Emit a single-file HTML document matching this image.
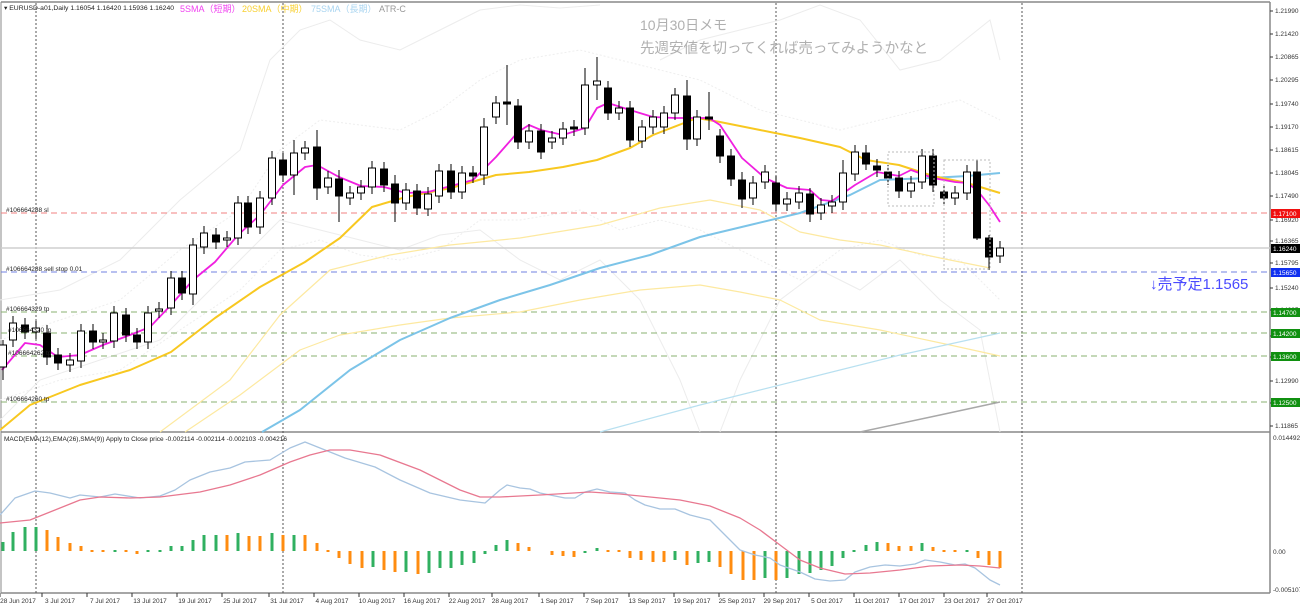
<!DOCTYPE html>
<html><head><meta charset="utf-8"><style>
html,body{margin:0;padding:0;background:#fff;width:1300px;height:608px;overflow:hidden}
svg{display:block}
text{font-family:"Liberation Sans","Noto Sans CJK JP",sans-serif}
</style></head><body>
<svg id="s" width="1300" height="608" xmlns="http://www.w3.org/2000/svg">
<rect width="1300" height="608" fill="#fff"/>
<line x1="1" y1="2" x2="1270" y2="2" stroke="#888" stroke-width="1.5"/>
<line x1="1" y1="2" x2="1" y2="593" stroke="#888"/>
<line x1="1270" y1="2" x2="1270" y2="593" stroke="#888" stroke-width="1.5"/>
<line x1="1" y1="432" x2="1270" y2="432" stroke="#888" stroke-width="1.5"/>
<line x1="1" y1="593" x2="1270" y2="593" stroke="#888" stroke-width="1.5"/>
<g stroke="#555" stroke-dasharray="2,2" stroke-width="1">
<line x1="36" y1="3" x2="36" y2="593"/><line x1="283" y1="3" x2="283" y2="593"/>
<line x1="776" y1="3" x2="776" y2="593"/><line x1="1022" y1="3" x2="1022" y2="593"/>
</g>
<g fill="none" stroke="#ececec" stroke-width="1">
<polyline points="0,300 60,290 120,260 180,200 240,150 270,60 300,30 330,20 360,40 400,50 440,30 480,10 520,5 560,8 600,5"/>
<polyline points="660,60 700,40 740,30 780,20 820,5 860,20 900,70 940,60 990,20 1000,60"/>
<polyline points="0,420 40,380 100,360 160,340 200,300 240,260 280,220 320,230 360,240 400,250 440,235 480,230 520,260 560,280 600,260 640,300 680,380 700,432"/>
<polyline points="720,432 740,380 780,300 820,270 860,290 900,260 940,300 980,330 1000,432"/>
</g>
<g fill="none" stroke="#eeeeee" stroke-dasharray="2,2" stroke-width="1">
<polyline points="0,340 60,320 120,300 180,250 240,210 280,150 320,120 360,125 400,130 440,110 480,80 520,60 580,50 620,60 660,70 700,80 760,110 800,120 840,130 880,120 920,110 960,100 1000,120"/>
<polyline points="0,400 60,380 120,370 180,330 240,290 280,250 320,240 360,255 400,260 440,250 480,220 520,220 580,210 620,230 660,220 700,230 760,260 800,280 840,250 880,240 920,255 960,260 1000,300"/>
</g>
<line x1="1" y1="213" x2="1270" y2="213" stroke="#f08080" stroke-dasharray="6,4"/>
<line x1="1" y1="248" x2="1270" y2="248" stroke="#cfcfcf" stroke-width="1.5"/>
<line x1="1" y1="272" x2="1270" y2="272" stroke="#7080e0" stroke-dasharray="6,4"/>
<g stroke="#8ab070" stroke-dasharray="6,4">
<line x1="1" y1="312" x2="1270" y2="312"/><line x1="1" y1="333" x2="1270" y2="333"/>
<line x1="1" y1="356" x2="1270" y2="356"/><line x1="1" y1="402" x2="1270" y2="402"/>
</g>
<g fill="none" stroke-linejoin="round">
<polyline stroke="#fde9a0" stroke-width="1.2" points="160,432 230,380 280,315 330,270 390,255 450,245 520,238 600,225 660,208 710,200 760,210 800,232 840,240 880,245 940,258 990,268"/>
<polyline stroke="#fde9a0" stroke-width="1.2" points="185,432 240,395 300,350 340,335 400,325 450,318 520,312 580,300 640,290 700,285 740,292 780,300 820,320 880,330 950,345 1000,356"/>
<polyline stroke="#b8e0f0" stroke-width="1.2" points="600,432 700,405 800,380 900,355 1000,333"/>
<polyline stroke="#a8a8a8" stroke-width="1.5" points="860,432 940,415 1000,402"/>
<polyline stroke="#7cc4e8" stroke-width="2" points="262,432 300,410 350,370 400,340 450,318 500,300 550,285 600,268 650,255 700,237 750,225 800,213 850,195 880,180 930,178 967,176 1000,173"/>
<polyline stroke="#f8c820" stroke-width="2" points="0,430 30,405 80,385 130,370 171,352 215,318 260,287 305,262 340,238 372,207 406,197 451,188 496,175 529,172 563,167 597,160 630,148 653,135 697,118 720,122 760,130 800,138 840,147 866,160 899,165 933,176 967,183 1000,193"/>
<polyline stroke="#f020e0" stroke-width="1.8" points="2,370 25,343 40,345 58,357 80,355 103,345 130,335 150,327 171,305 193,280 215,262 238,235 260,215 283,185 305,167 317,165 339,177 361,186 384,187 406,193 428,192 451,186 473,180 496,157 518,132 529,125 541,130 563,135 585,128 597,108 608,103 630,110 653,117 675,118 697,118 709,118 720,125 742,158 765,178 787,188 810,190 821,200 832,201 855,185 877,172 899,176 911,170 933,178 955,182 967,183 977,190 989,205 1000,222"/>
</g>
<g id="candles"></g>
<g fill="none" stroke="#bbb" stroke-dasharray="2,2">
<rect x="888" y="152" width="46" height="54"/><rect x="944" y="160" width="46" height="109"/>
</g>
<g font-size="6.5" fill="#222">
<text x="6" y="212">#106664288 sl</text>
<text x="6" y="271">#106664288 sell stop 0.01</text>
<text x="6" y="311">#106664329 tp</text>
<text x="8" y="332">#106664320 tp</text>
<text x="8" y="355">#106664262 tp</text>
<text x="6" y="401">#106664260 tp</text>
</g>
<text x="4" y="10" font-size="6.5" fill="#222" textLength="170" lengthAdjust="spacingAndGlyphs">▾ EURUSD-a01,Daily  1.16054 1.16420 1.15936 1.16240</text>
<text x="180" y="12" font-size="9" fill="#f040f0">5SMA（短期）</text>
<text x="242" y="12" font-size="9" fill="#f8d030">20SMA（中期）</text>
<text x="311" y="12" font-size="9" fill="#a8d4f0">75SMA（長期）</text>
<text x="379" y="12" font-size="9" fill="#999">ATR-C</text>
<text x="640" y="30" font-size="14" fill="#b0b0b0">10月30日メモ</text>
<text x="640" y="53" font-size="14.5" fill="#b0b0b0">先週安値を切ってくれば売ってみようかなと</text>
<text x="1150" y="289" font-size="15" fill="#4a4aff">↓売予定1.1565</text>
<g font-size="6.5" fill="#333" id="axis"></g>
<g font-size="6.5">
<rect x="1271" y="209" width="29" height="9" fill="#f01010"/><text x="1273" y="216" fill="#fff">1.17100</text>
<rect x="1271" y="244" width="29" height="9" fill="#000"/><text x="1273" y="251" fill="#fff">1.16240</text>
<rect x="1271" y="268" width="29" height="9" fill="#1030f0"/><text x="1273" y="275" fill="#fff">1.15650</text>
<rect x="1271" y="308" width="29" height="9" fill="#109010"/><text x="1273" y="315" fill="#fff">1.14700</text>
<rect x="1271" y="329" width="29" height="9" fill="#109010"/><text x="1273" y="336" fill="#fff">1.14200</text>
<rect x="1271" y="352" width="29" height="9" fill="#109010"/><text x="1273" y="359" fill="#fff">1.13600</text>
<rect x="1271" y="398" width="29" height="9" fill="#109010"/><text x="1273" y="405" fill="#fff">1.12500</text>
</g>
<text x="4" y="441" font-size="6.5" fill="#222">MACD(EMA(12),EMA(26),SMA(9)) Apply to Close price -0.002114 -0.002114 -0.002103 -0.004216</text>
<g id="hist"></g>
<g fill="none" stroke-linejoin="round" stroke-width="1.3">
<polyline stroke="#a8c4e0" points="0,515 15,498 35,491 50,493 70,498 80,495 100,497 115,494 140,498 160,496 175,490 190,480 210,472 230,468 245,462 270,460 290,448 305,442 320,448 345,458 375,467 400,480 430,493 460,500 485,503 500,490 507,485 520,488 530,489 540,493 550,495 565,498 575,498 585,492 597,489 610,492 625,493 635,500 645,505 660,509 675,509 690,515 710,520 725,535 740,550 755,555 770,558 780,565 800,572 815,579 830,581 845,580 855,572 870,567 885,565 900,566 915,564 925,560 940,562 955,565 965,564 975,568 990,580 1000,585"/>
<polyline stroke="#e87890" points="0,523 30,520 60,508 80,500 100,497 130,498 160,497 200,492 230,485 260,475 290,462 310,455 330,450 350,450 380,455 420,470 460,490 480,497 500,497 540,495 590,492 620,494 650,497 680,500 710,506 740,518 760,530 780,545 800,560 820,568 845,574 870,573 900,570 930,566 960,565 980,566 1000,568"/>
</g>
<g font-size="6.5" fill="#333">
<text x="1273" y="440">0.014492</text>
<text x="1273" y="554">0.00</text>
<text x="1273" y="592">-0.005107</text>
</g>
<g font-size="6.5" fill="#333" id="dates"></g>
</svg>
<script>
var NS="http://www.w3.org/2000/svg";
function el(p,t,a,txt){var e=document.createElementNS(NS,t);for(var k in a)e.setAttribute(k,a[k]);if(txt)e.textContent=txt;p.appendChild(e);return e;}
var C=[[3,345,367,0],[13,323,340,0],[25,325,332,1],[36,328,332,0],[47,333,357,1],[58,355,363,1],[70,360,365,0],[81,331,361,0],[93,331,342,1],[103,340,342,0],[114,313,341,0],[126,315,335,1],[137,335,342,1],[148,313,342,0],[159,309,311,0],[171,278,308,0],[182,278,293,1],[193,245,294,0],[204,233,247,0],[216,235,242,1],[227,238,240,0],[238,203,238,0],[248,203,227,1],[260,198,227,0],[272,158,198,0],[283,160,175,1],[294,153,175,0],[305,148,153,0],[317,147,188,1],[328,178,187,0],[339,179,196,1],[350,193,198,0],[361,187,193,0],[372,168,187,0],[384,169,185,1],[395,184,203,1],[406,190,203,0],[417,191,208,1],[428,194,209,0],[439,171,196,0],[451,171,192,1],[462,173,192,0],[473,173,176,1],[484,127,175,0],[496,103,117,0],[507,102,104,1],[518,106,142,1],[529,131,142,0],[541,131,152,1],[552,138,142,0],[563,129,138,0],[574,127,129,1],[585,85,128,0],[597,81,85,0],[608,88,113,1],[619,108,113,0],[630,108,140,1],[642,127,141,0],[653,117,127,0],[664,113,127,0],[675,95,113,0],[687,96,139,1],[697,117,139,0],[709,117,119,1],[720,136,156,1],[731,156,179,1],[742,180,199,1],[753,183,198,0],[765,172,182,0],[776,183,204,1],[787,199,204,0],[799,193,202,0],[810,194,214,1],[821,205,213,0],[832,202,206,0],[843,173,202,0],[855,152,174,0],[866,153,164,1],[877,166,170,1],[888,172,178,1],[899,178,191,1],[911,183,191,0],[922,156,182,0],[933,156,185,1],[944,192,198,1],[955,193,198,0],[967,172,193,0],[977,172,238,1],[989,238,257,1],[1000,248,256,0]];
var W={507:[65,125],597:[57,100],687:[80,150],317:[130,200],294:[140,195],484:[118,185],585:[68,135],418:[180,232],395:[175,222],339:[170,222],709:[92,130],977:[160,240],989:[235,270],843:[160,210],866:[145,170],193:[238,305],810:[188,222],742:[172,208],47:[325,365],3:[340,380]};
var g=document.getElementById("candles");
C.forEach(function(c){var x=c[0],w=W[x]||[c[1]-7,c[2]+7];
el(g,"line",{x1:x,y1:w[0],x2:x,y2:w[1],stroke:"#000","stroke-width":1});
var h=Math.max(c[2]-c[1],1.5);
el(g,"rect",{x:x-3.5,y:c[1],width:7,height:h,fill:c[3]?"#000":"#fff",stroke:"#000","stroke-width":1});});
var ax=document.getElementById("axis");
[["1.21990",13],["1.21420",36],["1.20865",59],["1.20295",82],["1.19740",106],["1.19170",129],["1.18615",152],["1.18045",175],["1.17490",198],["1.16920",222],["1.16365",243],["1.15795",265],["1.15240",290],["1.14685",312],["1.14115",338],["1.13550",359],["1.12990",383],["1.12420",405],["1.11865",428]].forEach(function(a){
el(ax,"line",{x1:1270,y1:a[1]-2,x2:1273,y2:a[1]-2,stroke:"#333"});el(ax,"text",{x:1275,y:a[1]},a[0]);});
var H=[[3,542,1],[13,532,1],[25,527,1],[36,527,1],[47,530,0],[58,537,0],[70,543,0],[81,546,0],[92,550,0],[103,552,0],[115,550,1],[126,552,0],[137,554,0],[148,552,1],[160,551,1],[171,546,1],[182,546,1],[193,540,1],[204,535,1],[216,535,1],[227,535,0],[238,533,1],[249,536,0],[260,536,0],[272,533,1],[283,535,0],[294,535,1],[305,535,0],[317,543,0],[328,550,0],[339,558,0],[350,564,0],[362,568,0],[373,567,1],[384,570,0],[395,572,0],[406,572,1],[418,574,0],[429,573,1],[440,568,1],[451,568,1],[462,565,1],[474,563,1],[485,554,1],[496,545,1],[507,540,1],[518,543,0],[529,547,0],[552,555,0],[563,556,0],[574,557,0],[585,553,1],[597,548,1],[608,550,0],[619,551,0],[630,558,0],[641,560,0],[653,562,0],[664,562,0],[675,560,1],[687,565,0],[698,563,1],[709,562,1],[720,567,0],[731,574,0],[743,580,0],[754,580,0],[765,578,1],[776,580,0],[787,578,1],[799,574,1],[810,573,1],[821,570,1],[832,566,1],[843,558,1],[854,550,1],[866,545,1],[877,542,1],[888,543,0],[899,546,0],[911,546,0],[922,543,1],[933,547,0],[944,552,0],[955,552,0],[967,550,1],[978,558,0],[989,565,0],[1000,568,0]];
var hg=document.getElementById("hist");
H.forEach(function(h){var y0=Math.min(551,h[1]),y1=Math.max(551,h[1]);if(y1-y0<1.5){y0=550;y1=552;}
el(hg,"rect",{x:h[0]-1.5,y:y0,width:3,height:y1-y0,fill:h[2]?"#30b060":"#ff8c10"});});
var dg=document.getElementById("dates");
[["28 Jun 2017",18],["3 Jul 2017",60],["7 Jul 2017",105],["13 Jul 2017",150],["19 Jul 2017",195],["25 Jul 2017",240],["31 Jul 2017",287],["4 Aug 2017",332],["10 Aug 2017",377],["16 Aug 2017",422],["22 Aug 2017",467],["28 Aug 2017",510],["1 Sep 2017",557],["7 Sep 2017",602],["13 Sep 2017",647],["19 Sep 2017",692],["25 Sep 2017",737],["29 Sep 2017",782],["5 Oct 2017",827],["11 Oct 2017",872],["17 Oct 2017",917],["23 Oct 2017",962],["27 Oct 2017",1005]].forEach(function(d){
el(dg,"line",{x1:d[1]-18,y1:593,x2:d[1]-18,y2:597,stroke:"#333"});
el(dg,"text",{x:d[1],y:603,"text-anchor":"middle"},d[0]);});
</script>
</body></html>
